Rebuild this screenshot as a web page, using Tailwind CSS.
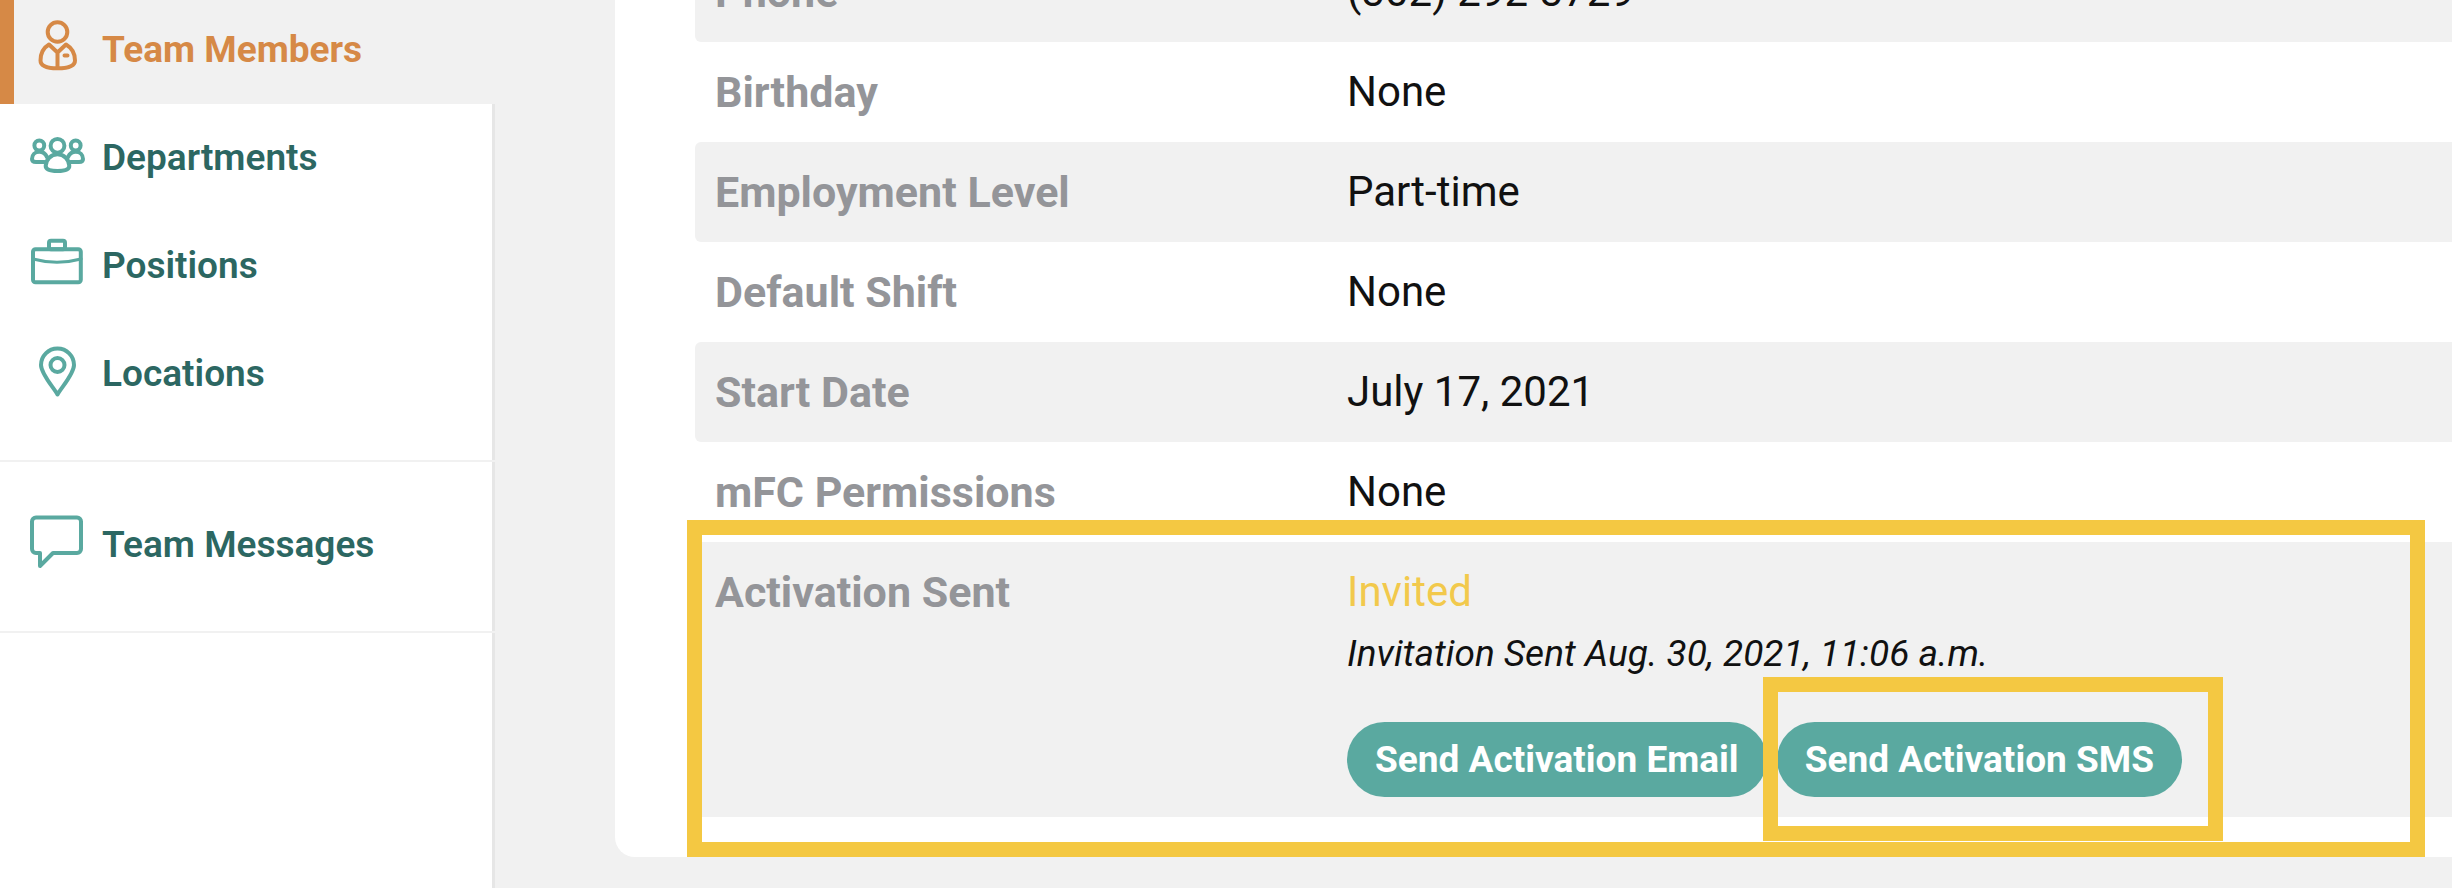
<!DOCTYPE html>
<html lang="en">
<head>
  <meta charset="UTF-8">
  <meta name="viewport" content="width=device-width, initial-scale=1.0">
  <title>Team Members</title>
  <script src="https://cdn.jsdelivr.net/npm/@tailwindcss/browser@4"></script>
</head>
<body class="bg-[#f1f1f1] font-['Roboto',sans-serif] text-[#111111]">
  <div class="flex min-h-screen overflow-hidden">
    <!-- Sidebar -->
    <nav class="w-[495px] shrink-0 bg-white text-[37px] font-semibold text-[#2c6762]">
      <div class="border-b-2 border-[#f1f1f1]">
        <a href="#" class="-mt-1 flex h-[108px] items-center gap-3 border-l-14 border-[#d68946] bg-[#f1f1f1] pl-3 font-bold text-[#d68946]">
          <svg class="size-16" viewBox="0 0 64 64" fill="none" stroke="currentColor" stroke-width="4" stroke-linecap="round" stroke-linejoin="round">
            <circle cx="31.5" cy="14" r="9.8" />
            <path d="M23 26.5 31.5 34.5 40 26.5C46 30 49 36 49 42.5C49 48 42 50.3 31.5 50.3S14.5 48 14.5 42.5C14.5 36 17 30 23 26.5ZM31.5 34.5V50M38.5 37.5H41.5" />
          </svg>
          Team Members
        </a>
        <div class="border-r-3 border-[#e6e6e6] pb-8">
          <a href="#" class="flex h-[108px] items-center gap-3 pl-[26px]">
            <svg class="size-16 text-[#5aa9a0]" viewBox="0 0 64 64" fill="none" stroke="currentColor" stroke-width="4" stroke-linecap="round" stroke-linejoin="round">
              <circle cx="31.5" cy="19.8" r="6.9" />
              <circle cx="13.3" cy="19.5" r="4.9" />
              <circle cx="49.7" cy="19.5" r="4.9" />
              <path d="M31.5 28.3C38 28.3 43.3 34 43.3 40C43.3 44 38 45 31.5 45S19.7 44 19.7 40C19.7 34 25 28.3 31.5 28.3Z" />
              <path d="M18.5 36H10C7 36 6 35 6 33C6 29 9 25.8 13.3 25.8C17 25.8 19.5 28 21 31M44.5 36H53C56 36 57 35 57 33C57 29 54 25.8 49.7 25.8C46 25.8 43.5 28 42 31" />
            </svg>
            Departments
          </a>
          <a href="#" class="flex h-[108px] items-center gap-3 pl-[26px]">
            <svg class="size-16 text-[#5aa9a0]" viewBox="0 0 64 64" fill="none" stroke="currentColor" stroke-width="4" stroke-linecap="round" stroke-linejoin="round">
              <rect x="7" y="15.3" width="47.8" height="33" rx="2.5" />
              <rect x="23" y="6.7" width="16" height="8.6" rx="2" />
              <path d="M7 25Q31 31.5 55 25" stroke-width="3.2" />
            </svg>
            Positions
          </a>
          <a href="#" class="flex h-[108px] items-center gap-3 pl-[26px]">
            <svg class="size-16 text-[#5aa9a0]" viewBox="0 0 64 64" fill="none" stroke="currentColor" stroke-width="4" stroke-linecap="round" stroke-linejoin="round">
              <path d="M31.5 52.5C28 46 15 32 15 23A16.5 16.5 0 0 1 48 23C48 32 35 46 31.5 52.5Z" />
              <circle cx="31.5" cy="23" r="7" />
            </svg>
            Locations
          </a>
        </div>
      </div>
      <div class="border-b-2 border-[#f1f1f1]">
        <div class="border-r-3 border-[#e6e6e6] pt-[29px] pb-8">
          <a href="#" class="flex h-[108px] items-center gap-3 pl-[26px]">
            <svg class="size-16 text-[#5aa9a0]" viewBox="0 0 64 64" fill="none" stroke="currentColor" stroke-width="4" stroke-linecap="round" stroke-linejoin="round">
              <path d="M27 40H51A4 4 0 0 0 55 36V8.5A4 4 0 0 0 51 4.5H10A4 4 0 0 0 6 8.5V36A4 4 0 0 0 10 40H14V53Z" />
            </svg>
            Team Messages
          </a>
        </div>
      </div>
      <div class="h-full border-r-3 border-[#e6e6e6]"></div>
    </nav>

    <!-- Member details -->
    <main class="ml-30 min-w-0 flex-1">
      <section class="relative rounded-bl-[20px] bg-white pb-10 pl-20">
        <table class="-mt-[58px] w-full border-separate border-spacing-0 text-left text-[42px] leading-[60px]">
          <tbody>
            <tr class="bg-[#f1f1f1]">
              <th scope="row" class="w-[652px] rounded-l-md py-5 pl-5 text-[43px] font-bold text-[#949599]">Phone</th>
              <td class="py-5">(302) 292-3729</td>
            </tr>
            <tr>
              <th scope="row" class="w-[652px] py-5 pl-5 text-[43px] font-bold text-[#949599]">Birthday</th>
              <td class="py-5">None</td>
            </tr>
            <tr class="bg-[#f1f1f1]">
              <th scope="row" class="w-[652px] rounded-l-md py-5 pl-5 text-[43px] font-bold text-[#949599]">Employment Level</th>
              <td class="py-5">Part-time</td>
            </tr>
            <tr>
              <th scope="row" class="w-[652px] py-5 pl-5 text-[43px] font-bold text-[#949599]">Default Shift</th>
              <td class="py-5">None</td>
            </tr>
            <tr class="bg-[#f1f1f1]">
              <th scope="row" class="w-[652px] rounded-l-md py-5 pl-5 text-[43px] font-bold text-[#949599]">Start Date</th>
              <td class="py-5">July 17, 2021</td>
            </tr>
            <tr>
              <th scope="row" class="w-[652px] py-5 pl-5 text-[43px] font-bold text-[#949599]">mFC Permissions</th>
              <td class="py-5">None</td>
            </tr>
            <tr class="bg-[#f1f1f1]">
              <th scope="row" class="w-[652px] rounded-l-md py-5 pl-5 align-top text-[43px] font-bold text-[#949599]">Activation Sent</th>
              <td class="py-5">
                <p class="text-[#f2c94c]">Invited</p>
                <p class="mt-0.5 text-[37px] leading-[60px] italic">Invitation Sent Aug. 30, 2021, 11:06 a.m.</p>
                <div class="mt-[38px] flex gap-2.5 text-[37px] font-bold text-white">
                  <button type="button" class="h-[75px] rounded-full bg-[#5aa9a0] px-7">Send Activation Email</button>
                  <div class="relative">
                    <button type="button" class="h-[75px] rounded-full bg-[#5aa9a0] px-7">Send Activation SMS</button>
                    <div class="pointer-events-none absolute -top-[45px] -right-[41px] -bottom-11 -left-3.5 border-15 border-[#f4c842]"></div>
                  </div>
                </div>
              </td>
            </tr>
          </tbody>
        </table>
        <!-- Highlight around the activation row -->
        <div class="pointer-events-none absolute right-[27px] bottom-0 left-[72px] h-[337px] border-15 border-[#f4c842]"></div>
      </section>
    </main>
  </div>
</body>
</html>
